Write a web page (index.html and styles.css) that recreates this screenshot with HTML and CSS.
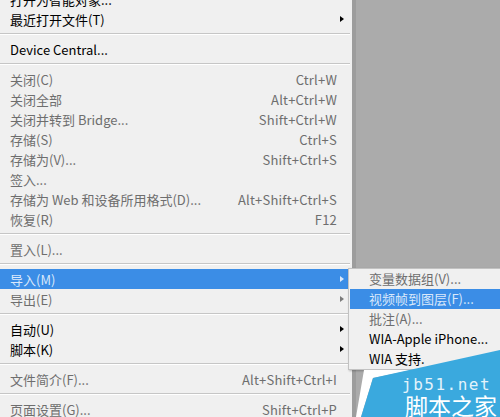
FILE: index.html
```html
<!DOCTYPE html>
<html lang="zh">
<head>
<meta charset="UTF-8">
<title>文件菜单</title>
<link rel="stylesheet" href="styles.css">
</head>
<body>
<div class="menu">
    <div class="item"><span class="label">打开为智能对象...</span></div>
    <div class="item"><span class="label">最近打开文件(T)</span><span class="arrow"></span></div>
    <div class="sep"></div>
    <div class="item"><span class="label">Device Central...</span></div>
    <div class="sep"></div>
    <div class="item off"><span class="label">关闭(C)</span><span class="key">Ctrl+W</span></div>
    <div class="item off"><span class="label">关闭全部</span><span class="key">Alt+Ctrl+W</span></div>
    <div class="item off"><span class="label">关闭并转到 Bridge...</span><span class="key">Shift+Ctrl+W</span></div>
    <div class="item off"><span class="label">存储(S)</span><span class="key">Ctrl+S</span></div>
    <div class="item off"><span class="label">存储为(V)...</span><span class="key">Shift+Ctrl+S</span></div>
    <div class="item off"><span class="label">签入...</span></div>
    <div class="item off"><span class="label">存储为 Web 和设备所用格式(D)...</span><span class="key">Alt+Shift+Ctrl+S</span></div>
    <div class="item off"><span class="label">恢复(R)</span><span class="key">F12</span></div>
    <div class="sep"></div>
    <div class="item off"><span class="label">置入(L)...</span></div>
    <div class="sep"></div>
    <div class="item off hover"><span class="label">导入(M)</span><span class="arrow"></span></div>
    <div class="item off"><span class="label">导出(E)</span><span class="arrow"></span></div>
    <div class="sep"></div>
    <div class="item"><span class="label">自动(U)</span><span class="arrow"></span></div>
    <div class="item"><span class="label">脚本(K)</span><span class="arrow"></span></div>
    <div class="sep"></div>
    <div class="item off"><span class="label">文件简介(F)...</span><span class="key">Alt+Shift+Ctrl+I</span></div>
    <div class="sep"></div>
    <div class="item off"><span class="label">页面设置(G)...</span><span class="key">Shift+Ctrl+P</span></div>
</div>

<div class="submenu">
    <div class="sub-item off">变量数据组(V)...</div>
    <div class="sub-item off hover">视频帧到图层(F)...</div>
    <div class="sub-item off">批注(A)...</div>
    <div class="sub-item">WIA-Apple iPhone...</div>
    <div class="sub-item">WIA 支持.</div>
</div>

<div class="mark">
    <svg class="mark-bg" width="144" height="72" viewBox="0 0 144 72">
        <polygon points="8,25 56,25 17,33 5,72 0,72" fill="#ffffff"/>
        <polygon points="17,33 144,5 144,72 5,72" fill="#3aa9de"/>
    </svg>
    <span class="mark-url">jb51.net</span>
    <span class="mark-name">脚本之家</span>
</div>
</body>
</html>
```

FILE: styles.css
```css
body {
    margin: 0;
    background: #ababab;
    font-family: "Noto Sans CJK SC", "Noto Sans", sans-serif;
    font-size: 13px;
    overflow: hidden;
    height: 417px;
}
.menu {
    width: 352px;
    margin-top: -11px;
    background: #f0f0f0;
    border-right: 4px solid #9d9d9d;
}
.item {
    display: flex;
    align-items: center;
    height: 20px;
    margin-right: 4px;
    padding-left: 10px;
    color: #000;
}
.item.off {
    color: #6e6e6e;
}
.item.hover {
    background: #3b8de6;
    color: #d9e8fb;
}
.label {
    flex: 1;
    white-space: nowrap;
}
.key {
    padding-right: 11px;
    white-space: nowrap;
    letter-spacing: 0.2px;
}
.arrow {
    width: 0;
    height: 0;
    margin-right: 4px;
    border-top: 3.5px solid transparent;
    border-bottom: 3.5px solid transparent;
    border-left: 4px solid #000;
}
.item.off .arrow {
    border-left-color: #7a7a7a;
}
.item.hover .arrow {
    border-left-color: #d9e8fb;
}
.sep {
    height: 10px;
    margin-right: 2px;
    box-sizing: border-box;
    padding-top: 4px;
}
.sep::before {
    content: "";
    display: block;
    height: 1px;
    background: #c6c6c6;
    border-bottom: 1px solid #ffffff;
}
.submenu {
    position: absolute;
    left: 348px;
    top: 268px;
    width: 160px;
    background: #f0f0f0;
    border: 1px solid #c2c2c2;
    box-shadow: 1px 1px 2px rgba(0, 0, 0, 0.25);
}
.sub-item {
    height: 20px;
    line-height: 20px;
    padding-left: 19px;
    margin-left: 1px;
    color: #000;
    white-space: nowrap;
}
.sub-item.off {
    color: #6e6e6e;
}
.sub-item.hover {
    background: #3b8de6;
    color: #d9e8fb;
}
.mark {
    position: absolute;
    left: 356px;
    top: 345px;
    width: 144px;
    height: 72px;
}
.mark-bg {
    position: absolute;
    left: 0;
    top: 0;
}
.mark-url {
    position: absolute;
    left: 46px;
    top: 32px;
    font-family: "DejaVu Sans Mono", monospace;
    font-size: 16px;
    letter-spacing: 1.5px;
    line-height: 16px;
    color: #e3f3fb;
}
.mark-name {
    position: absolute;
    left: 49px;
    top: 49px;
    font-size: 23px;
    line-height: 23px;
    color: #ffffff;
}
```
